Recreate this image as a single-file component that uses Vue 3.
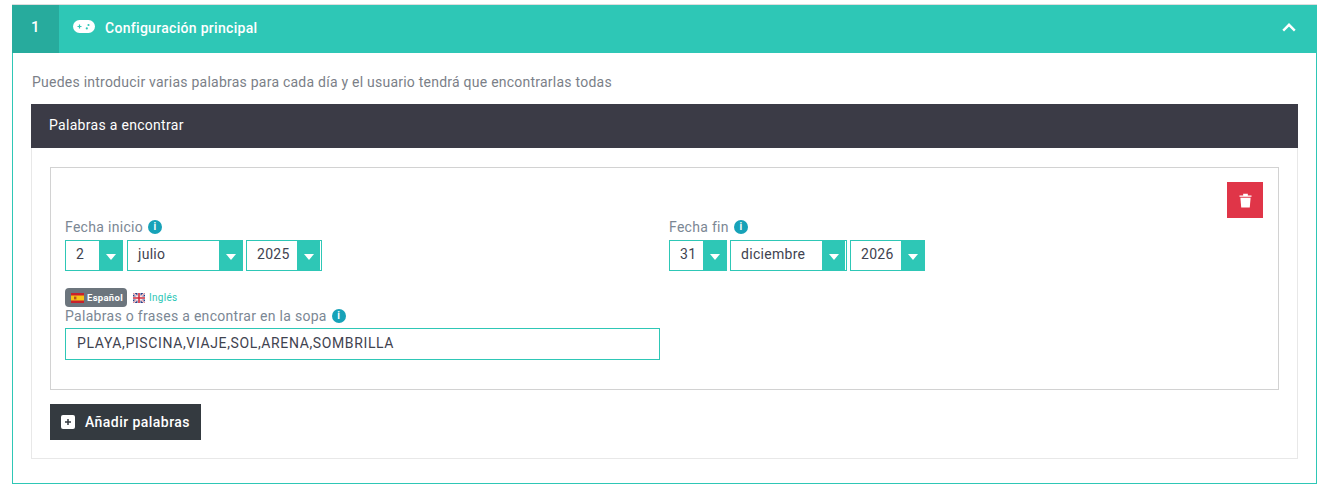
<script setup>
const groups = [
  { label: 'Fecha inicio', parts: [
    { value: '2', cls: 'w-day wide-gap' },
    { value: 'julio', cls: 'w-month-a' },
    { value: '2025', cls: 'w-year gap-arrow' },
  ] },
  { label: 'Fecha fin', parts: [
    { value: '31', cls: 'w-day' },
    { value: 'diciembre', cls: 'w-month gap-arrow' },
    { value: '2026', cls: 'w-year-b' },
  ] },
]
</script>

<template>
  <div class="page">
    <section class="card">
      <header class="head">
        <div class="step">1</div>
        <svg class="pad" viewBox="0 0 22 14" width="22" height="14">
          <rect x="0" y="0" width="22" height="13" rx="6.5" fill="#fff" />
          <path d="M4.5 6.5h4M6.5 4.5v4" stroke="#2ec7b6" stroke-width="1.2" />
          <circle cx="15.5" cy="5" r="1.1" fill="#2ec7b6" />
          <circle cx="13.8" cy="8.4" r="1.1" fill="#2ec7b6" />
        </svg>
        <h2 class="title">Configuración principal</h2>
        <svg class="chev" viewBox="0 0 14 9" width="14" height="9">
          <path d="M1.2 7.6 7 1.8l5.8 5.8" fill="none" stroke="#fff" stroke-width="2.4" />
        </svg>
      </header>
      <div class="body">
        <p class="hint">Puedes introducir varias palabras para cada día y el usuario tendrá que encontrarlas todas</p>
        <div class="bar">Palabras a encontrar</div>
        <div class="panel">
          <div class="box">
            <div class="tools">
              <button class="del" type="button" aria-label="Eliminar">
                <svg viewBox="0 0 14 16" width="13" height="15">
                  <path d="M.5 2.6h13V4H.5zM4.5 .8h5v1.8h-5z" fill="#fff" />
                  <path d="M1.5 5h11l-.9 10.6H2.4z" fill="#fff" />
                </svg>
              </button>
            </div>
            <div class="dates">
              <div v-for="g in groups" :key="g.label" class="date">
                <div class="label">{{ g.label }}
                  <span class="info">i</span>
                </div>
                <div class="selects">
                  <div v-for="p in g.parts" :key="p.value" class="select" :class="p.cls">
                    <span class="val">{{ p.value }}</span>
                    <span class="arrow"><i></i></span>
                  </div>
                </div>
              </div>
            </div>
            <div class="langs">
              <span class="lang on">
                <svg class="flag" viewBox="0 0 13 10" width="13" height="10">
                  <rect width="13" height="10" fill="#c8202c" />
                  <rect y="2.5" width="13" height="5" fill="#f6c416" />
                  <rect x="3" y="3.6" width="2.4" height="2.8" fill="#b5501f" />
                </svg>
                Español
              </span>
              <span class="lang">
                <svg class="flag" viewBox="0 0 12 10" width="12" height="10">
                  <rect width="12" height="10" fill="#2b3f86" />
                  <path d="M0 0l12 10M12 0 0 10" stroke="#fff" stroke-width="1.8" />
                  <path d="M0 0l12 10M12 0 0 10" stroke="#d0283a" stroke-width=".6" />
                  <path d="M6 0v10M0 5h12" stroke="#fff" stroke-width="3" />
                  <path d="M6 0v10M0 5h12" stroke="#d0283a" stroke-width="1.6" />
                </svg>
                Inglés
              </span>
            </div>
            <div class="label words">Palabras o frases a encontrar en la sopa
              <span class="info">i</span>
            </div>
            <div class="field">PLAYA,PISCINA,VIAJE,SOL,ARENA,SOMBRILLA</div>
          </div>
          <button class="add" type="button">
            <svg viewBox="0 0 14 14" width="14" height="14">
              <rect width="14" height="14" rx="2" fill="#fff" />
              <path d="M7 4v6M4 7h6" stroke="#343a40" stroke-width="1.5" />
            </svg>
            Añadir palabras
          </button>
        </div>
      </div>
    </section>
  </div>
</template>

<style>
html, body { margin: 0; background: #fff; }
</style>

<style scoped>
.page {
  width: 1324px;
  height: 492px;
  padding: 4px 7px 0 12px;
  box-sizing: border-box;
  font-family: Roboto, "Liberation Sans", sans-serif;
  letter-spacing: .3px;
  overflow: hidden;
}
.card {
  width: 1305px;
  border-top: 1px solid #ddd;
  box-sizing: border-box;
}
.head {
  height: 48px;
  background: #2ec7b6;
  display: flex;
  align-items: center;
  color: #fff;
}
.step {
  width: 47px;
  height: 44px;
  padding-bottom: 4px;
  background: #27ab9d;
  display: flex;
  align-items: center;
  justify-content: center;
  font-size: 15px;
  font-weight: 500;
}
.pad { margin: 0 0 4px 14px; }
.title {
  margin: 0 0 3px 10px;
  font-size: 14px;
  font-weight: 500;
  flex: 1;
}
.chev { margin: 0 21px 4px 0; }
.body {
  border: 1px solid #2ec7b6;
  border-top: 0;
  height: 431px;
  box-sizing: border-box;
  padding: 0 18px;
}
.hint {
  margin: 0;
  height: 51px;
  box-sizing: border-box;
  padding: 19px 0 0 1px;
  font-size: 14px;
  line-height: 20px;
  letter-spacing: .235px;
  color: #7b7f88;
}
.bar {
  height: 44px;
  background: #3b3b46;
  color: #fff;
  font-size: 14px;
  line-height: 42px;
  padding-left: 18px;
}
.panel {
  height: 311px;
  box-sizing: border-box;
  border: 1px solid #e8e8e8;
  border-top: 0;
  padding: 19px 18px 0;
}
.box {
  height: 223px;
  box-sizing: border-box;
  border: 1px solid #d2d2d2;
  padding: 14px 15px 0 14px;
}
.tools {
  display: flex;
  justify-content: flex-end;
  height: 36px;
}
.del {
  width: 36px;
  height: 36px;
  padding: 0;
  border: 0;
  background: #e03548;
  display: flex;
  align-items: center;
  justify-content: center;
}
.dates {
  display: grid;
  grid-template-columns: 604px 1fr;
  margin-top: -1px;
}
.label {
  font-size: 14px;
  line-height: 20px;
  color: #7b8794;
  display: flex;
  align-items: center;
  gap: 5px;
}
.info {
  width: 14px;
  height: 14px;
  border-radius: 50%;
  background: #17a2b8;
  color: #fff;
  font-size: 10px;
  font-weight: 700;
  line-height: 14px;
  text-align: center;
}
.selects {
  display: flex;
  gap: 3px;
  margin-top: 3px;
}
.select {
  height: 31px;
  box-sizing: border-box;
  border: 1px solid #2ec7b6;
  display: flex;
  align-items: stretch;
  justify-content: space-between;
  font-size: 14px;
  color: #3f4350;
}
.w-day { width: 58px; }
.wide-gap { margin-right: 1px; }
.w-month { width: 117px; }
.w-month-a { width: 116px; }
.w-year { width: 76px; }
.w-year-b { width: 75px; }
.val {
  padding-left: 10px;
  line-height: 27px;
}
.arrow {
  width: 23px;
  background: #2ec7b6;
  display: flex;
  align-items: center;
  justify-content: center;
}
.gap-arrow .arrow { margin-right: 1px; }
.arrow i {
  width: 0;
  height: 0;
  border-left: 5px solid transparent;
  border-right: 5px solid transparent;
  border-top: 6px solid #fff;
  margin-top: 2px;
}
.langs {
  display: flex;
  align-items: center;
  gap: 6px;
  margin-top: 17px;
  height: 19px;
}
.lang {
  display: inline-flex;
  align-items: center;
  gap: 4px;
  font-size: 10px;
  color: #2ec7b6;
  height: 19px;
}
.lang.on {
  width: 62px;
  box-sizing: border-box;
  padding-left: 6px;
  background: #6c757d;
  color: #fff;
  font-size: 9.5px;
  font-weight: 700;
  border-radius: 4px;
  gap: 3px;
}
.words {
  margin-top: -1px;
  height: 19px;
}
.field {
  width: 595px;
  height: 32px;
  box-sizing: border-box;
  margin-top: 3px;
  border: 1px solid #2ec7b6;
  padding-left: 11px;
  font-size: 14px;
  line-height: 28px;
  letter-spacing: .63px;
  color: #3f4350;
}
.add {
  margin-top: 14px;
  width: 151px;
  height: 36px;
  border: 0;
  padding: 0 0 0 11px;
  background: #343a40;
  color: #fff;
  font-family: inherit;
  font-size: 14px;
  font-weight: 500;
  letter-spacing: .45px;
  display: flex;
  align-items: center;
  gap: 10px;
}
</style>
